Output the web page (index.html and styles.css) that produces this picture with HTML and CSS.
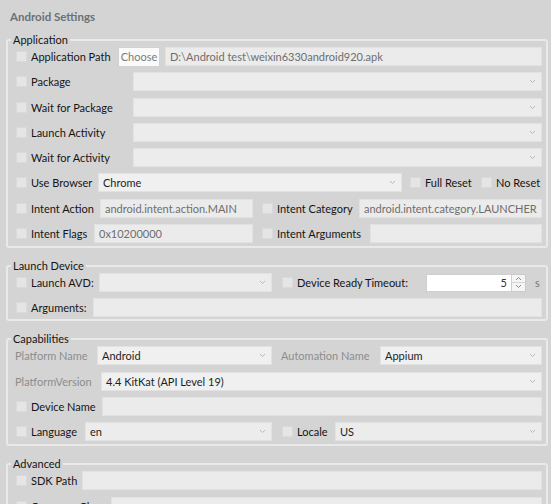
FILE: index.html
```html
<!DOCTYPE html>
<html>
<head>
<meta charset="utf-8">
<link rel="stylesheet" href="styles.css">
</head>
<body>
<div class="title">Android Settings</div>

<fieldset class="group">
  <legend>Application</legend>
  <div class="row">
    <div class="lead l-app"><span class="cb"></span>Application Path</div>
    <div class="btn">Choose</div>
    <div class="field grow val-grey">D:\Android test\weixin6330android920.apk</div>
  </div>
  <div class="row">
    <div class="lead l-combo"><span class="cb"></span>Package</div>
    <div class="field combo grow"><span></span><svg class="chev" width="7" height="5" viewBox="0 0 7 5"><polyline points="1,1 3.5,3.5 6,1"/></svg></div>
  </div>
  <div class="row">
    <div class="lead l-combo"><span class="cb"></span>Wait for Package</div>
    <div class="field combo grow"><span></span><svg class="chev" width="7" height="5" viewBox="0 0 7 5"><polyline points="1,1 3.5,3.5 6,1"/></svg></div>
  </div>
  <div class="row">
    <div class="lead l-combo"><span class="cb"></span>Launch Activity</div>
    <div class="field combo grow"><span></span><svg class="chev" width="7" height="5" viewBox="0 0 7 5"><polyline points="1,1 3.5,3.5 6,1"/></svg></div>
  </div>
  <div class="row">
    <div class="lead l-combo"><span class="cb"></span>Wait for Activity</div>
    <div class="field combo grow"><span></span><svg class="chev" width="7" height="5" viewBox="0 0 7 5"><polyline points="1,1 3.5,3.5 6,1"/></svg></div>
  </div>
  <div class="row">
    <div class="lead l-browser"><span class="cb"></span>Use Browser</div>
    <div class="field combo light w-browser"><span>Chrome</span><svg class="chev" width="7" height="5" viewBox="0 0 7 5"><polyline points="1,1 3.5,3.5 6,1"/></svg></div>
    <div class="lead l-full"><span class="cb"></span>Full Reset</div>
    <div class="lead"><span class="cb"></span>No Reset</div>
  </div>
  <div class="row">
    <div class="lead l-iaction"><span class="cb"></span>Intent Action</div>
    <div class="field w-iaction val-grey">android.intent.action.MAIN</div>
    <div class="lead l-icat"><span class="cb"></span>Intent Category</div>
    <div class="field grow val-grey">android.intent.category.LAUNCHER</div>
  </div>
  <div class="row">
    <div class="lead l-iflags"><span class="cb"></span>Intent Flags</div>
    <div class="field w-iflags val-grey">0x10200000</div>
    <div class="lead l-iargs"><span class="cb"></span>Intent Arguments</div>
    <div class="field grow"></div>
  </div>
</fieldset>

<fieldset class="group tight">
  <legend>Launch Device</legend>
  <div class="row">
    <div class="lead l-avd"><span class="cb"></span>Launch AVD:</div>
    <div class="field combo w-avd"><span></span><svg class="chev" width="7" height="5" viewBox="0 0 7 5"><polyline points="1,1 3.5,3.5 6,1"/></svg></div>
    <div class="lead l-timeout"><span class="cb"></span>Device Ready Timeout:</div>
    <div class="num">5</div>
    <div class="spin">
      <div class="spin-half"><svg width="7" height="5" viewBox="0 0 7 5"><polyline points="1,4 3.5,1.5 6,4"/></svg></div>
      <div class="spin-half"><svg width="7" height="5" viewBox="0 0 7 5"><polyline points="1,1 3.5,3.5 6,1"/></svg></div>
    </div>
    <div class="unit">s</div>
  </div>
  <div class="row">
    <div class="lead l-args"><span class="cb"></span>Arguments:</div>
    <div class="field grow"></div>
  </div>
</fieldset>

<fieldset class="group">
  <legend>Capabilities</legend>
  <div class="row">
    <div class="lead l-pname dis">Platform Name</div>
    <div class="field combo light w-pname"><span>Android</span><svg class="chev" width="7" height="5" viewBox="0 0 7 5"><polyline points="1,1 3.5,3.5 6,1"/></svg></div>
    <div class="lead l-auto dis">Automation Name</div>
    <div class="field combo light grow"><span>Appium</span><svg class="chev" width="7" height="5" viewBox="0 0 7 5"><polyline points="1,1 3.5,3.5 6,1"/></svg></div>
  </div>
  <div class="row">
    <div class="lead l-pver dis">PlatformVersion</div>
    <div class="field combo light grow"><span>4.4 KitKat (API Level 19)</span><svg class="chev" width="7" height="5" viewBox="0 0 7 5"><polyline points="1,1 3.5,3.5 6,1"/></svg></div>
  </div>
  <div class="row">
    <div class="lead l-dname"><span class="cb"></span>Device Name</div>
    <div class="field grow"></div>
  </div>
  <div class="row">
    <div class="lead l-lang"><span class="cb"></span>Language</div>
    <div class="field combo w-lang"><span>en</span><svg class="chev" width="7" height="5" viewBox="0 0 7 5"><polyline points="1,1 3.5,3.5 6,1"/></svg></div>
    <div class="lead l-locale"><span class="cb"></span>Locale</div>
    <div class="field combo grow"><span>US</span><svg class="chev" width="7" height="5" viewBox="0 0 7 5"><polyline points="1,1 3.5,3.5 6,1"/></svg></div>
  </div>
</fieldset>

<fieldset class="group">
  <legend>Advanced</legend>
  <div class="row">
    <div class="lead l-sdk"><span class="cb"></span>SDK Path</div>
    <div class="field grow"></div>
  </div>
  <div class="row">
    <div class="lead l-cov"><span class="cb"></span>Coverage Class</div>
    <div class="field grow"></div>
  </div>
</fieldset>
</body>
</html>
```
FILE: styles.css
```css
html, body {
  margin: 0;
  padding: 0;
  overflow: hidden;
}
body {
  width: 551px;
  height: 504px;
  background: #d4d4d4;
  font-family: Lato, "Open Sans", sans-serif;
  font-size: 11px;
  color: #141414;
}
.title {
  font-weight: 700;
  font-size: 11.5px;
  color: #6a7176;
  padding: 10px 0 0 10px;
  line-height: 14px;
  height: 14px;
  margin-bottom: 9px;
}
.group {
  border: 2px solid #e9e9e9;
  border-radius: 3px;
  margin: 0 3px 0 6px;
  padding: 0 3px 3px 8px;
  min-width: 0;
}
.group.tight {
  padding-bottom: 2px;
}
.group + .group {
  margin-top: 11px;
}
legend {
  padding: 0 2px;
  margin-left: -5px;
  line-height: 14px;
  color: #141414;
}
.row {
  display: flex;
  align-items: center;
  height: 19px;
}
.row + .row {
  margin-top: 6.3px;
}
.lead {
  flex: none;
  display: flex;
  align-items: center;
  white-space: nowrap;
}
.cb {
  flex: none;
  width: 11px;
  height: 11px;
  box-sizing: border-box;
  background: #e5e5e5;
  border: 1px solid #dadada;
  margin-right: 4px;
}
.dis {
  color: #8d8d8d;
  margin-left: -1px;
}
.field {
  flex: none;
  height: 19px;
  box-sizing: border-box;
  background: #ebebeb;
  border: 1px solid #e2e2e2;
  display: flex;
  align-items: center;
  padding: 0 4px;
  color: #1e1e1e;
  white-space: nowrap;
  overflow: hidden;
}
.grow {
  flex: 1;
  min-width: 0;
  margin-right: 1px;
}
.val-grey {
  color: #6e6e6e;
}
.combo {
  justify-content: space-between;
  background: #ececec;
  padding-right: 5px;
}
.combo.light {
  background: #f0f0f0;
}
.chev {
  flex: none;
  fill: none;
  stroke: #b9b9b9;
  stroke-width: 1;
}
.btn {
  flex: none;
  width: 42px;
  height: 20px;
  box-sizing: border-box;
  background: #fafafa;
  border: 1px solid #d2d2d2;
  color: #7a7a7a;
  display: flex;
  align-items: center;
  justify-content: center;
  margin-right: 5px;
}
.num {
  flex: none;
  width: 86px;
  height: 18px;
  box-sizing: border-box;
  background: #ffffff;
  border: 1px solid #cfcfcf;
  display: flex;
  align-items: center;
  justify-content: flex-end;
  padding-right: 4px;
  color: #333;
}
.spin {
  flex: none;
  width: 14px;
  height: 18px;
  box-sizing: border-box;
  border: 1px solid #cacaca;
  border-left: none;
  background: #f5f5f5;
  display: flex;
  flex-direction: column;
}
.spin-half {
  flex: 1;
  display: flex;
  align-items: center;
  justify-content: center;
}
.spin-half + .spin-half {
  border-top: 1px solid #d4d4d4;
}
.spin svg {
  fill: none;
  stroke: #8a8a8a;
  stroke-width: 1;
}
.unit {
  margin-left: 9px;
  color: #777;
}

/* lead widths (checkbox + label cells) */
.l-app { width: 102px; }
.l-combo { width: 117px; }
.l-browser { width: 82px; }
.l-full { width: 71px; margin-left: 8px; }
.l-iaction { width: 84px; }
.l-icat { width: 97px; margin-left: 9px; }
.l-iflags { width: 78px; }
.l-iargs { width: 108px; margin-left: 9px; }
.l-avd { width: 83px; }
.l-timeout { width: 144px; margin-left: 10px; }
.l-args { width: 77px; }
.l-pname { width: 82px; }
.l-auto { width: 99px; margin-left: 9px; }
.l-pver { width: 86px; }
.l-dname { width: 86px; }
.l-lang { width: 69px; }
.l-locale { width: 53px; margin-left: 10px; }
.l-sdk { width: 66px; }
.l-cov { width: 95px; }

/* field widths */
.w-browser { width: 304px; }
.w-iaction { width: 153px; }
.w-iflags { width: 159px; }
.w-avd { width: 173px; }
.w-pname { width: 175px; }
.w-lang { width: 187px; }
```
